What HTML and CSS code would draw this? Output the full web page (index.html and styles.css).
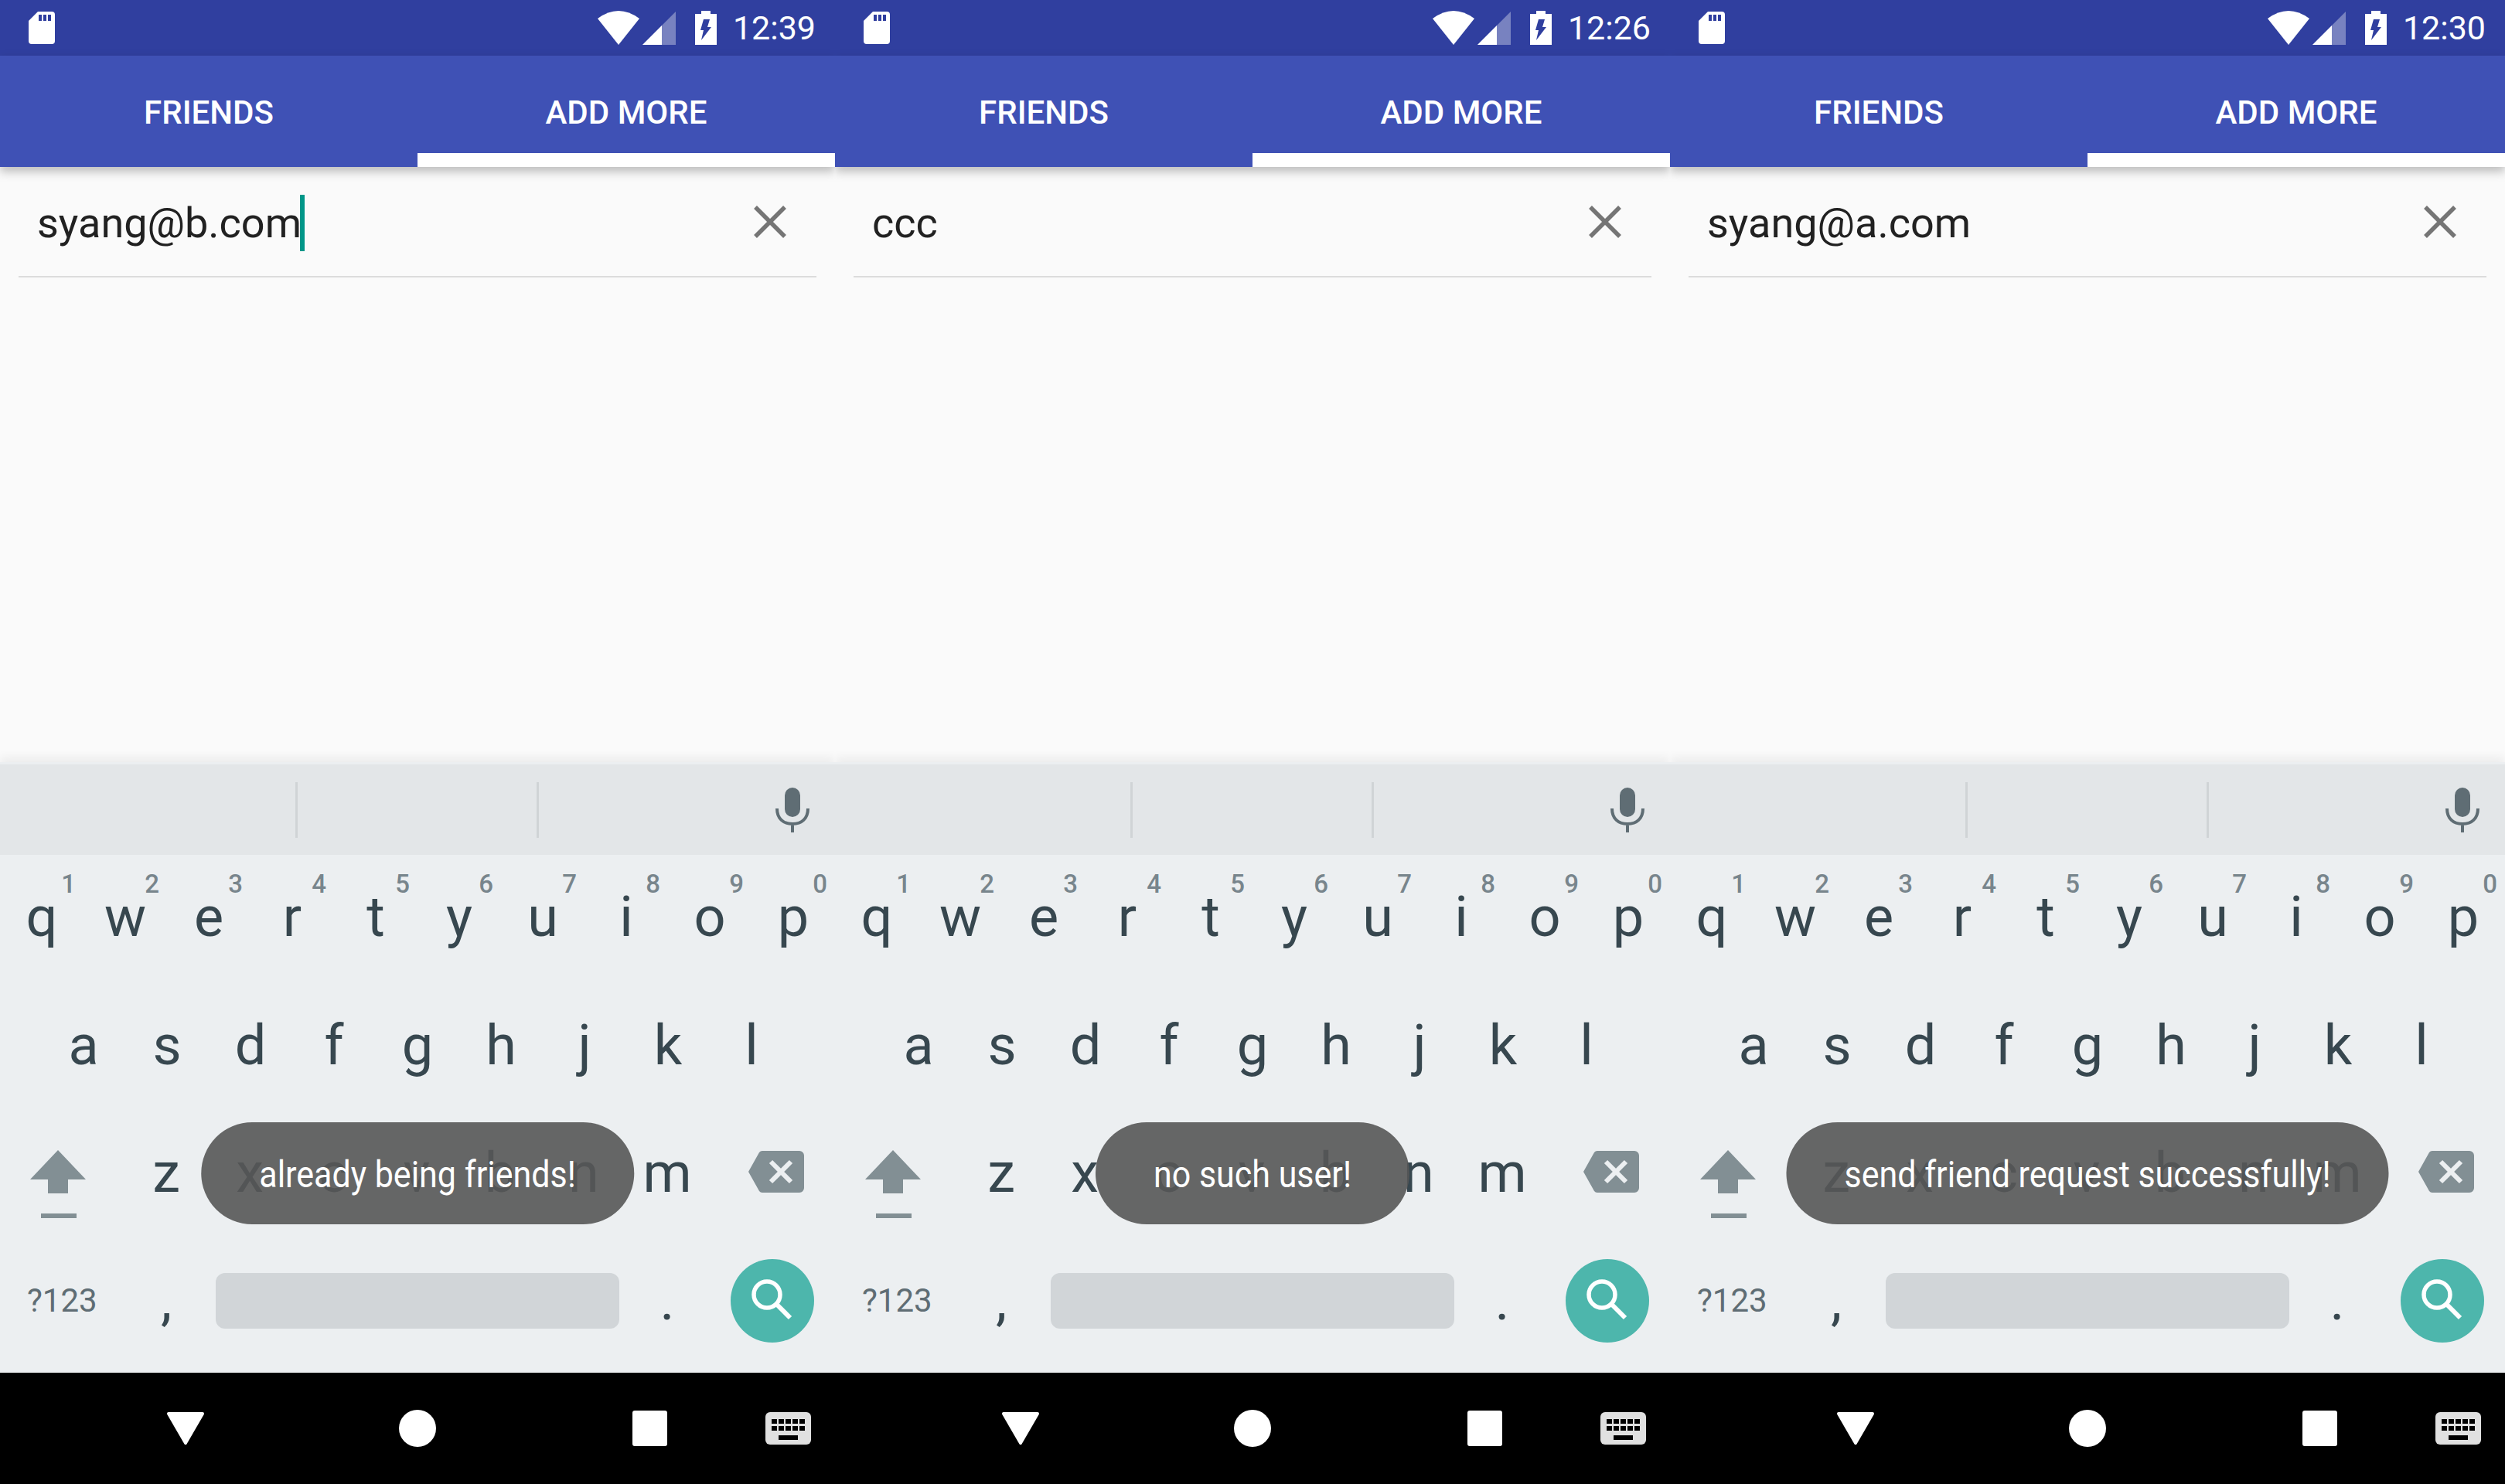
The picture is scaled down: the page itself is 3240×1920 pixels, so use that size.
FILE: index.html
```html
<!DOCTYPE html>
<html lang="en">
<head>
    <meta charset="UTF-8">
    <title>Add friends</title>
    <link rel="stylesheet" href="styles.css">
</head>
<body>
    <!-- iconos compartidos por las tres pantallas -->
    <svg class="sprite">
        <symbol id="i-sd" viewBox="0 0 34 42"><path fill="#fff" d="M12 0H30a4 4 0 0 1 4 4V38a4 4 0 0 1-4 4H4a4 4 0 0 1-4-4V12Z"/><path fill="#303f9f" d="M13 4h4v8h-4zM19 4h4v8h-4zM25 4h4v8h-4z"/></symbol>
        <symbol id="i-wifi" viewBox="0 0 54 44"><path fill="#fff" d="M0 10Q27-10 54 10L27 44Z"/></symbol>
        <symbol id="i-signal" viewBox="0 0 43 43"><path fill="#fff" opacity=".35" d="M0 43 43 0V43Z"/><path fill="#fff" d="M0 43 25 18V43Z"/></symbol>
        <symbol id="i-battery" viewBox="0 0 28 44"><path fill="#fff" d="M8 0H20V4H28V44H0V4H8Z"/><path fill="#303f9f" d="M11 11H19L16 21H21L8 38 11 25H7Z"/></symbol>
        <symbol id="i-close" viewBox="0 0 44 44"><path stroke="#757575" stroke-width="5.5" d="M3 3 41 41M41 3 3 41"/></symbol>
        <symbol id="i-mic" viewBox="0 0 44 58"><rect x="12" width="20" height="38" rx="10" fill="#5f6d74"/><path fill="none" stroke="#5f6d74" stroke-width="4" d="M2 27C2 40 10 47 22 47S42 40 42 27M22 47V58"/></symbol>
        <symbol id="i-shift" viewBox="0 0 72 88"><path fill="#828f94" d="M36 0 72 38H49V56H23V38H0ZM14 82H60V88H14Z"/></symbol>
        <symbol id="i-backspace" viewBox="0 0 72 54"><path fill="#828f94" d="M19 0H66a6 6 0 0 1 6 6V48a6 6 0 0 1-6 6H19a6 6 0 0 1-5-2L0 27 14 2a6 6 0 0 1 5-2Z"/><path stroke="#eceff1" stroke-width="6" d="M29 14 55 40M55 14 29 40"/></symbol>
        <symbol id="i-search" viewBox="0 0 108 108"><circle cx="54" cy="54" r="54" fill="#4db6ac"/><circle cx="47" cy="46" r="17" fill="none" stroke="#fff" stroke-width="5.5"/><path stroke="#fff" stroke-width="6" d="M60 59 77 76"/></symbol>
        <symbol id="i-back" viewBox="0 0 48 42"><path fill="#fff" stroke="#fff" stroke-width="4" stroke-linejoin="round" d="M2 2H46L24 40Z"/></symbol>
        <symbol id="i-home" viewBox="0 0 48 48"><circle cx="24" cy="24" r="24" fill="#fff"/></symbol>
        <symbol id="i-recent" viewBox="0 0 45 46"><rect width="45" height="46" rx="3" fill="#fff"/></symbol>
        <symbol id="i-keyboard" viewBox="0 0 59 42"><rect width="59" height="42" rx="6" fill="#e0e0e0"/><path fill="#000" d="M8 9h7v6H8zM17 9h7v6h-7zM26 9h7v6h-7zM35 9h7v6h-7zM44 9h7v6h-7zM8 18h7v6H8zM17 18h7v6h-7zM26 18h7v6h-7zM35 18h7v6h-7zM44 18h7v6h-7zM17 30h25v6H17z"/></symbol>
    </svg>

    <div class="screens">
        <!-- Pantalla 1 -->
        <section class="phone">
            <header class="status-bar">
                <svg class="ic-sd"><use href="#i-sd"/></svg>
                <svg class="ic-wifi"><use href="#i-wifi"/></svg>
                <svg class="ic-signal"><use href="#i-signal"/></svg>
                <svg class="ic-battery"><use href="#i-battery"/></svg>
                <span class="clock">12:39</span>
            </header>
            <nav class="tabs">
                <div class="tab">FRIENDS</div>
                <div class="tab active">ADD MORE</div>
            </nav>
            <main class="content">
                <div class="search">
                    <div class="query">syang@b.com<span class="caret"></span></div>
                    <svg class="ic-close"><use href="#i-close"/></svg>
                </div>
            </main>
            <div class="keyboard">
                <div class="suggestions">
                    <div class="slot"></div>
                    <div class="slot"></div>
                    <div class="slot"><svg class="ic-mic"><use href="#i-mic"/></svg></div>
                </div>
                <div class="keys">
                    <div class="row row-top">
                        <div class="key">q<sup>1</sup></div><div class="key">w<sup>2</sup></div><div class="key">e<sup>3</sup></div><div class="key">r<sup>4</sup></div><div class="key">t<sup>5</sup></div><div class="key">y<sup>6</sup></div><div class="key">u<sup>7</sup></div><div class="key">i<sup>8</sup></div><div class="key">o<sup>9</sup></div><div class="key">p<sup>0</sup></div>
                    </div>
                    <div class="row row-home">
                        <div class="key">a</div><div class="key">s</div><div class="key">d</div><div class="key">f</div><div class="key">g</div><div class="key">h</div><div class="key">j</div><div class="key">k</div><div class="key">l</div>
                    </div>
                    <div class="row row-low">
                        <div class="key key-shift"><svg class="ic-shift"><use href="#i-shift"/></svg></div>
                        <div class="key">z</div><div class="key">x</div><div class="key">c</div><div class="key">v</div><div class="key">b</div><div class="key">n</div><div class="key">m</div>
                        <div class="key key-back"><svg class="ic-backspace"><use href="#i-backspace"/></svg></div>
                    </div>
                    <div class="row row-bottom">
                        <div class="key key-sym">?123</div>
                        <div class="key">,</div>
                        <div class="spacebar"></div>
                        <div class="key">.</div>
                        <svg class="ic-search"><use href="#i-search"/></svg>
                    </div>
                </div>
            </div>
            <div class="toast"><span>already being friends!</span></div>
            <footer class="navbar">
                <svg class="ic-back"><use href="#i-back"/></svg>
                <svg class="ic-home"><use href="#i-home"/></svg>
                <svg class="ic-recent"><use href="#i-recent"/></svg>
                <svg class="ic-keyboard"><use href="#i-keyboard"/></svg>
            </footer>
        </section>

        <!-- Pantalla 2 -->
        <section class="phone">
            <header class="status-bar">
                <svg class="ic-sd"><use href="#i-sd"/></svg>
                <svg class="ic-wifi"><use href="#i-wifi"/></svg>
                <svg class="ic-signal"><use href="#i-signal"/></svg>
                <svg class="ic-battery"><use href="#i-battery"/></svg>
                <span class="clock">12:26</span>
            </header>
            <nav class="tabs">
                <div class="tab">FRIENDS</div>
                <div class="tab active">ADD MORE</div>
            </nav>
            <main class="content">
                <div class="search">
                    <div class="query">ccc</div>
                    <svg class="ic-close"><use href="#i-close"/></svg>
                </div>
            </main>
            <div class="keyboard">
                <div class="suggestions">
                    <div class="slot"></div>
                    <div class="slot"></div>
                    <div class="slot"><svg class="ic-mic"><use href="#i-mic"/></svg></div>
                </div>
                <div class="keys">
                    <div class="row row-top">
                        <div class="key">q<sup>1</sup></div><div class="key">w<sup>2</sup></div><div class="key">e<sup>3</sup></div><div class="key">r<sup>4</sup></div><div class="key">t<sup>5</sup></div><div class="key">y<sup>6</sup></div><div class="key">u<sup>7</sup></div><div class="key">i<sup>8</sup></div><div class="key">o<sup>9</sup></div><div class="key">p<sup>0</sup></div>
                    </div>
                    <div class="row row-home">
                        <div class="key">a</div><div class="key">s</div><div class="key">d</div><div class="key">f</div><div class="key">g</div><div class="key">h</div><div class="key">j</div><div class="key">k</div><div class="key">l</div>
                    </div>
                    <div class="row row-low">
                        <div class="key key-shift"><svg class="ic-shift"><use href="#i-shift"/></svg></div>
                        <div class="key">z</div><div class="key">x</div><div class="key">c</div><div class="key">v</div><div class="key">b</div><div class="key">n</div><div class="key">m</div>
                        <div class="key key-back"><svg class="ic-backspace"><use href="#i-backspace"/></svg></div>
                    </div>
                    <div class="row row-bottom">
                        <div class="key key-sym">?123</div>
                        <div class="key">,</div>
                        <div class="spacebar"></div>
                        <div class="key">.</div>
                        <svg class="ic-search"><use href="#i-search"/></svg>
                    </div>
                </div>
            </div>
            <div class="toast"><span>no such user!</span></div>
            <footer class="navbar">
                <svg class="ic-back"><use href="#i-back"/></svg>
                <svg class="ic-home"><use href="#i-home"/></svg>
                <svg class="ic-recent"><use href="#i-recent"/></svg>
                <svg class="ic-keyboard"><use href="#i-keyboard"/></svg>
            </footer>
        </section>

        <!-- Pantalla 3 -->
        <section class="phone">
            <header class="status-bar">
                <svg class="ic-sd"><use href="#i-sd"/></svg>
                <svg class="ic-wifi"><use href="#i-wifi"/></svg>
                <svg class="ic-signal"><use href="#i-signal"/></svg>
                <svg class="ic-battery"><use href="#i-battery"/></svg>
                <span class="clock">12:30</span>
            </header>
            <nav class="tabs">
                <div class="tab">FRIENDS</div>
                <div class="tab active">ADD MORE</div>
            </nav>
            <main class="content">
                <div class="search">
                    <div class="query">syang@a.com</div>
                    <svg class="ic-close"><use href="#i-close"/></svg>
                </div>
            </main>
            <div class="keyboard">
                <div class="suggestions">
                    <div class="slot"></div>
                    <div class="slot"></div>
                    <div class="slot"><svg class="ic-mic"><use href="#i-mic"/></svg></div>
                </div>
                <div class="keys">
                    <div class="row row-top">
                        <div class="key">q<sup>1</sup></div><div class="key">w<sup>2</sup></div><div class="key">e<sup>3</sup></div><div class="key">r<sup>4</sup></div><div class="key">t<sup>5</sup></div><div class="key">y<sup>6</sup></div><div class="key">u<sup>7</sup></div><div class="key">i<sup>8</sup></div><div class="key">o<sup>9</sup></div><div class="key">p<sup>0</sup></div>
                    </div>
                    <div class="row row-home">
                        <div class="key">a</div><div class="key">s</div><div class="key">d</div><div class="key">f</div><div class="key">g</div><div class="key">h</div><div class="key">j</div><div class="key">k</div><div class="key">l</div>
                    </div>
                    <div class="row row-low">
                        <div class="key key-shift"><svg class="ic-shift"><use href="#i-shift"/></svg></div>
                        <div class="key">z</div><div class="key">x</div><div class="key">c</div><div class="key">v</div><div class="key">b</div><div class="key">n</div><div class="key">m</div>
                        <div class="key key-back"><svg class="ic-backspace"><use href="#i-backspace"/></svg></div>
                    </div>
                    <div class="row row-bottom">
                        <div class="key key-sym">?123</div>
                        <div class="key">,</div>
                        <div class="spacebar"></div>
                        <div class="key">.</div>
                        <svg class="ic-search"><use href="#i-search"/></svg>
                    </div>
                </div>
            </div>
            <div class="toast"><span>send friend request successfully!</span></div>
            <footer class="navbar">
                <svg class="ic-back"><use href="#i-back"/></svg>
                <svg class="ic-home"><use href="#i-home"/></svg>
                <svg class="ic-recent"><use href="#i-recent"/></svg>
                <svg class="ic-keyboard"><use href="#i-keyboard"/></svg>
            </footer>
        </section>
    </div>
</body>
</html>
```

FILE: styles.css
```css
/* Estilos generales */
body {
    margin: 0;
    background-color: #fafafa;
    font-family: Roboto, "Noto Sans", sans-serif;
    color: #212121;
}

svg {
    display: block;
    flex: none;
}

.sprite {
    display: none;
}

.screens {
    display: flex;
    width: 3240px;
    height: 1920px;
    overflow: hidden;
}

.phone {
    position: relative;
    display: flex;
    flex-direction: column;
    width: 1080px;
    height: 1920px;
    overflow: hidden;
}

/* Barra de estado */
.status-bar {
    display: flex;
    align-items: center;
    height: 72px;
    padding: 0 25px 0 37px;
    box-sizing: border-box;
    background-color: #303f9f;
    color: white;
}

.ic-sd { width: 34px; height: 42px; margin-right: auto; }
.ic-wifi { width: 54px; height: 44px; }
.ic-signal { width: 43px; height: 43px; margin-left: 4px; }
.ic-battery { width: 28px; height: 44px; margin-left: 25px; }

.clock {
    margin-left: 21px;
    font-size: 43px;
}

/* Pestañas */
.tabs {
    position: relative;
    z-index: 1;
    display: flex;
    height: 144px;
    background-color: #3f51b5;
    box-shadow: 0 6px 12px rgba(0, 0, 0, 0.25);
}

.tab {
    flex: 1;
    display: flex;
    align-items: center;
    justify-content: center;
    padding-top: 2px;
    color: white;
    font-size: 42px;
    font-weight: 500;
}

.tab.active {
    box-shadow: inset 0 -18px 0 white;
}

/* Buscador */
.content {
    flex: 1;
    padding: 0 24px;
    background-color: #fafafa;
}

.search {
    display: flex;
    align-items: center;
    height: 141px;
    padding: 0 38px 0 24px;
    border-bottom: 2px solid #dcdcdc;
}

.query {
    flex: 1;
    display: flex;
    align-items: center;
    font-size: 54px;
    padding-top: 3px;
}

.caret {
    width: 6px;
    height: 73px;
    margin-left: -2px;
    background-color: #009688;
}

.ic-close { width: 44px; height: 44px; }

/* Teclado */
.keyboard {
    position: relative;
    background-color: #eceff1;
    padding-top: 3px;
    box-shadow: 0 -6px 12px rgba(0, 0, 0, 0.06);
}

.suggestions {
    display: flex;
    align-items: center;
    height: 117px;
    margin-bottom: 3px;
    background-color: #e3e6e8;
}

.slot {
    display: flex;
    align-items: center;
    justify-content: center;
    width: 309px;
    height: 72px;
    border-right: 3px solid #d0d4d6;
}

.slot:first-child {
    width: 382px;
}

.slot:last-child {
    flex: 1;
    border-right: none;
    justify-content: flex-end;
    padding-right: 33px;
}

.ic-mic { width: 44px; height: 58px; }

.keys {
    padding-bottom: 7px;
    color: #37474f;
}

.row {
    display: flex;
    height: 165px;
    line-height: 155px;
    font-size: 72px;
}

.row-home {
    padding-left: 54px;
    line-height: 157px;
}

.row-low {
    line-height: 157px;
}

.key {
    position: relative;
    width: 108px;
    text-align: center;
    flex: none;
}

.key sup {
    position: absolute;
    top: 18px;
    right: 10px;
    font-size: 33px;
    font-weight: 500;
    line-height: 1;
    color: #78858c;
}

.key-shift {
    display: flex;
    justify-content: center;
    width: 161px;
    padding: 49px 11px 0 0;
    box-sizing: border-box;
}

.ic-shift { width: 72px; height: 88px; }

.key-back {
    display: flex;
    justify-content: flex-end;
    width: 132px;
    padding: 50px 9px 0 0;
    box-sizing: border-box;
}

.ic-backspace { width: 72px; height: 54px; }

.row-bottom {
    align-items: flex-start;
    line-height: 157px;
}

.key-sym {
    width: 161px;
    padding-left: 35px;
    box-sizing: border-box;
    font-size: 42px;
    color: #5f6d74;
    text-align: left;
    white-space: nowrap;
}

.spacebar {
    width: 522px;
    height: 72px;
    margin: 43px 8px 0 10px;
    border-radius: 12px;
    background-color: #d1d5d8;
}

.ic-search {
    width: 108px;
    height: 108px;
    margin: 25px 0 0 28px;
}

/* Mensaje flotante */
.toast {
    position: absolute;
    left: 50%;
    bottom: 336px;
    transform: translateX(-50%);
    height: 132px;
    line-height: 134px;
    padding: 0 75px;
    border-radius: 66px;
    background-color: rgba(87, 87, 87, 0.9);
    color: white;
    font-size: 43px;
    white-space: nowrap;
}

/* texto mas alto que ancho, como en la captura */
.toast span {
    display: inline-block;
    transform: scaleY(1.12);
}

/* Barra de navegación */
.navbar {
    display: grid;
    grid-template-columns: 300px 300px 300px 90px;
    align-items: center;
    justify-items: center;
    height: 144px;
    padding-left: 90px;
    background-color: black;
}

.ic-back { width: 48px; height: 42px; }
.ic-home { width: 48px; height: 48px; }
.ic-recent { width: 45px; height: 46px; }
.ic-keyboard { width: 59px; height: 42px; justify-self: start; }
```
